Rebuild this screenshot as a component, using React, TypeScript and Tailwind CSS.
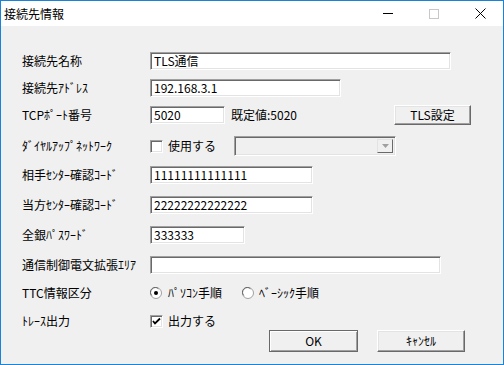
import React from 'react';

const font = { fontFamily: '"Noto Sans CJK JP", "Liberation Sans", sans-serif' };

function Field({ value, className }: { value: string; className: string }) {
  return (
    <div
      className={`h-[18px] bg-white border border-t-[#a0a0a0] border-l-[#a0a0a0] border-b-white border-r-white shadow-[inset_1px_1px_0_#696969,inset_-1px_-1px_0_#e3e3e3] pl-[3px] flex items-center text-[12px] leading-none text-black ${className}`}
    >
      {value}
    </div>
  );
}

function Button({ label, className, isDefault }: { label: string; className: string; isDefault?: boolean }) {
  return (
    <div
      className={`bg-[#f0f0f0] flex items-center justify-center text-[12px] leading-none text-black ${
        isDefault
          ? 'border border-[#696969] shadow-[inset_1px_1px_0_#fff,inset_-1px_-1px_0_#a0a0a0]'
          : 'border border-t-white border-l-white border-b-[#696969] border-r-[#696969] shadow-[inset_-1px_-1px_0_#a0a0a0,inset_1px_1px_0_#e3e3e3]'
      } ${className}`}
    >
      {label}
    </div>
  );
}

function CheckBox({ checked }: { checked?: boolean }) {
  return (
    <div className="w-[13px] h-[13px] bg-white border border-t-[#a0a0a0] border-l-[#a0a0a0] border-b-white border-r-white shadow-[inset_1px_1px_0_#696969,inset_-1px_-1px_0_#e3e3e3] flex items-center justify-center">
      {checked && (
        <svg width="9" height="9" viewBox="0 0 9 9">
          <path d="M1 4 L3 6.5 L8 1.5" stroke="#000" strokeWidth="1.8" fill="none" />
        </svg>
      )}
    </div>
  );
}

function Radio({ checked }: { checked?: boolean }) {
  return (
    <svg width="12" height="12" viewBox="0 0 12 12">
      <circle cx="6" cy="6" r="5.5" fill="#fff" stroke="#a0a0a0" />
      <path d="M1.8 8.5 A4.6 4.6 0 0 1 8.5 1.8" stroke="#696969" fill="none" />
      {checked && <circle cx="6" cy="6" r="2" fill="#000" />}
    </svg>
  );
}

function Row({ label, className, children }: { label: string; className: string; children?: React.ReactNode }) {
  return (
    <div className={`flex items-center ${className}`}>
      <div className="w-[128px] text-[12px] leading-none text-black whitespace-nowrap">{label}</div>
      {children}
    </div>
  );
}

export default function App() {
  return (
    <div style={font} className="w-[504px] h-[365px] border border-[#1883d7] bg-[#f0f0f0] flex flex-col">
      <div className="h-[25px] bg-white flex items-center shrink-0">
        <div className="pl-[3px] text-[12px] leading-none text-black">接続先情報</div>
        <div className="ml-auto flex items-center h-full">
          <div className="w-[46px] h-full flex items-center justify-center">
            <div className="w-[10px] h-px bg-black" />
          </div>
          <div className="w-[46px] h-full flex items-center justify-center">
            <div className="w-[10px] h-[10px] border border-[#c8c8c8]" />
          </div>
          <div className="w-[46px] h-full flex items-center justify-center">
            <svg width="11" height="11" viewBox="0 0 11 11">
              <path d="M0.5 0.5 L10.5 10.5 M10.5 0.5 L0.5 10.5" stroke="#000" strokeWidth="1" />
            </svg>
          </div>
        </div>
      </div>

      <div className="pl-[21px] flex flex-col">
        <Row label="接続先名称" className="mt-[26px] h-[18px]">
          <Field value="TLS通信" className="w-[301px]" />
        </Row>
        <Row label="接続先ｱﾄﾞﾚｽ" className="mt-[9px] h-[18px]">
          <Field value="192.168.3.1" className="w-[191px]" />
        </Row>
        <Row label="TCPﾎﾟｰﾄ番号" className="mt-[9px] h-[18px]">
          <Field value="5020" className="w-[75px]" />
          <div className="ml-[6px] text-[12px] leading-none text-black">既定値:5020</div>
          <Button label="TLS設定" className="ml-auto mr-[32px] w-[77px] h-[20px]" />
        </Row>
        <Row label="ﾀﾞｲﾔﾙｱｯﾌﾟﾈｯﾄﾜｰｸ" className="mt-[12px] h-[20px]">
          <CheckBox />
          <div className="ml-[5px] text-[12px] leading-none text-black">使用する</div>
          <div className="ml-[18px] w-[162px] h-[20px] bg-[#f0f0f0] border border-t-[#a0a0a0] border-l-[#a0a0a0] border-b-white border-r-white shadow-[inset_1px_1px_0_#696969,inset_-1px_-1px_0_#e3e3e3] flex justify-end p-[2px]">
            <div className="w-[16px] h-full bg-[#f0f0f0] border border-t-[#e3e3e3] border-l-[#e3e3e3] border-b-[#696969] border-r-[#696969] flex items-center justify-center">
              <svg width="7" height="4" viewBox="0 0 7 4">
                <path d="M0 0 L7 0 L3.5 4 Z" fill="#a0a0a0" />
              </svg>
            </div>
          </div>
        </Row>
        <Row label="相手ｾﾝﾀｰ確認ｺｰﾄﾞ" className="mt-[10px] h-[18px]">
          <Field value="11111111111111" className="w-[163px]" />
        </Row>
        <Row label="当方ｾﾝﾀｰ確認ｺｰﾄﾞ" className="mt-[12px] h-[18px]">
          <Field value="22222222222222" className="w-[163px]" />
        </Row>
        <Row label="全銀ﾊﾟｽﾜｰﾄﾞ" className="mt-[12px] h-[18px]">
          <Field value="333333" className="w-[95px]" />
        </Row>
        <Row label="通信制御電文拡張ｴﾘｱ" className="mt-[12px] h-[18px]">
          <Field value="" className="w-[291px]" />
        </Row>
        <Row label="TTC情報区分" className="mt-[10px] h-[18px]">
          <Radio checked />
          <div className="ml-[6px] text-[12px] leading-none text-black">ﾊﾟｿｺﾝ手順</div>
          <div className="ml-[20px]">
            <Radio />
          </div>
          <div className="ml-[5px] text-[12px] leading-none text-black">ﾍﾞｰｼｯｸ手順</div>
        </Row>
        <Row label="ﾄﾚｰｽ出力" className="mt-[10px] h-[18px]">
          <CheckBox checked />
          <div className="ml-[5px] text-[12px] leading-none text-black">出力する</div>
        </Row>
        <div className="flex h-[22px]">
          <Button label="OK" isDefault className="ml-[247px] w-[89px] h-[22px]" />
          <Button label="ｷｬﾝｾﾙ" className="ml-[19px] w-[88px] h-[22px]" />
        </div>
      </div>
    </div>
  );
}
